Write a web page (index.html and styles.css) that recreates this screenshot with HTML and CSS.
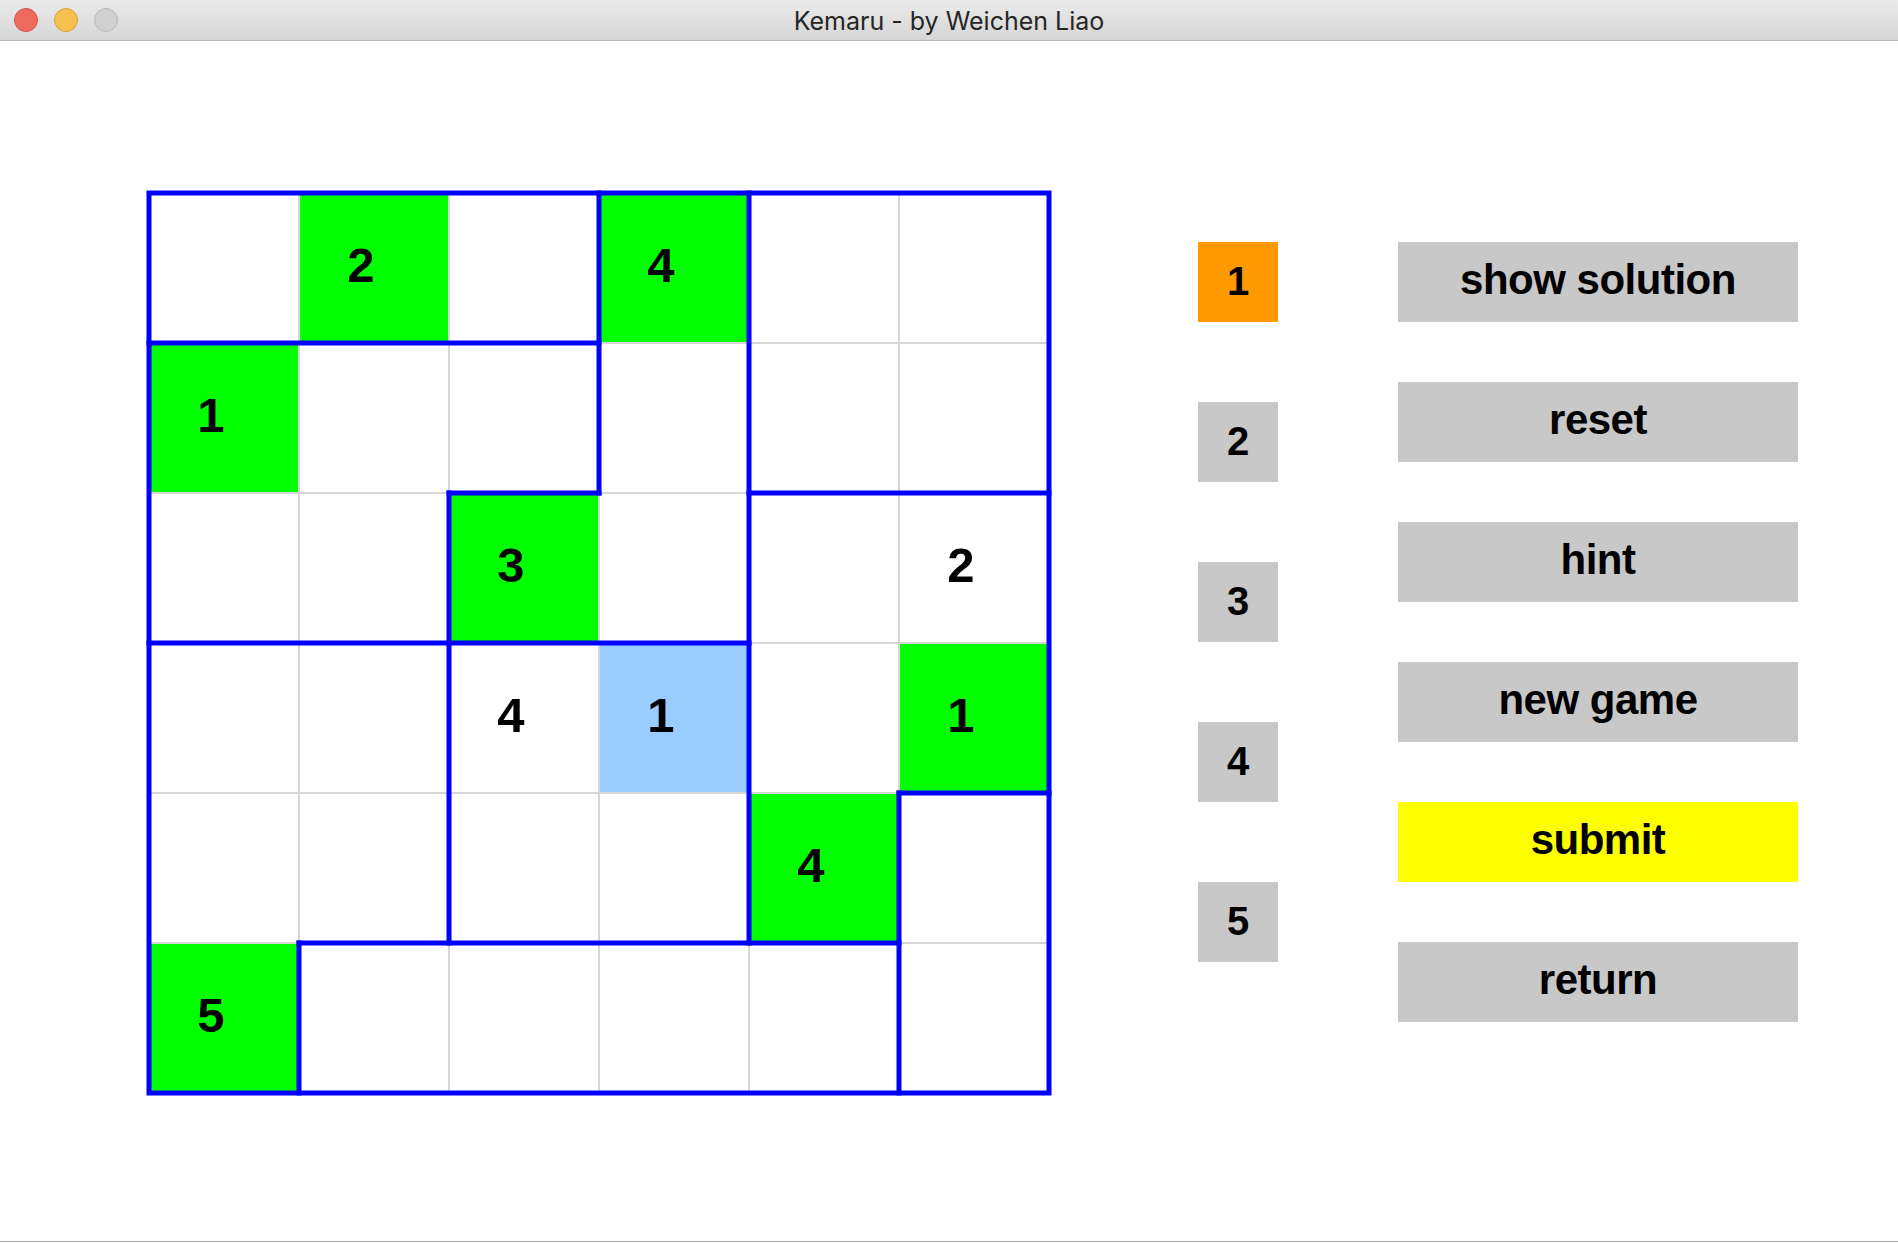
FILE: index.html
```html
<!DOCTYPE html>
<html>
<head>
<meta charset="utf-8">
<title>Kemaru - by Weichen Liao</title>
<link rel="stylesheet" href="styles.css">
</head>
<body>
<div class="window">
  <div class="titlebar">
    <div class="lights">
      <span class="light red"></span>
      <span class="light yellow"></span>
      <span class="light gray"></span>
    </div>
    <div class="title">Kemaru - by Weichen Liao</div>
  </div>
  <div class="content">
    <div class="board">
      <div class="cells">
        <div class="cell"></div>
        <div class="cell green">2</div>
        <div class="cell"></div>
        <div class="cell green">4</div>
        <div class="cell"></div>
        <div class="cell"></div>

        <div class="cell green">1</div>
        <div class="cell"></div>
        <div class="cell"></div>
        <div class="cell"></div>
        <div class="cell"></div>
        <div class="cell"></div>

        <div class="cell"></div>
        <div class="cell"></div>
        <div class="cell green">3</div>
        <div class="cell"></div>
        <div class="cell"></div>
        <div class="cell">2</div>

        <div class="cell"></div>
        <div class="cell"></div>
        <div class="cell">4</div>
        <div class="cell selected">1</div>
        <div class="cell"></div>
        <div class="cell green">1</div>

        <div class="cell"></div>
        <div class="cell"></div>
        <div class="cell"></div>
        <div class="cell"></div>
        <div class="cell green">4</div>
        <div class="cell"></div>

        <div class="cell green">5</div>
        <div class="cell"></div>
        <div class="cell"></div>
        <div class="cell"></div>
        <div class="cell"></div>
        <div class="cell"></div>
      </div>
      <svg class="regions" width="900" height="900" viewBox="0 0 900 900">
        <g stroke="#0000ff" stroke-width="5" stroke-linecap="square" fill="none">
          <rect x="0" y="0" width="900" height="900"/>
          <path d="M0 150 H450"/>
          <path d="M450 0 V300"/>
          <path d="M600 0 V750"/>
          <path d="M300 300 H450"/>
          <path d="M600 300 H900"/>
          <path d="M300 300 V750"/>
          <path d="M0 450 H600"/>
          <path d="M750 600 H900"/>
          <path d="M750 600 V900"/>
          <path d="M150 750 H750"/>
          <path d="M150 750 V900"/>
        </g>
      </svg>
    </div>
    <div class="numbers">
      <div class="num active">1</div>
      <div class="num">2</div>
      <div class="num">3</div>
      <div class="num">4</div>
      <div class="num">5</div>
    </div>
    <div class="actions">
      <div class="btn">show solution</div>
      <div class="btn">reset</div>
      <div class="btn">hint</div>
      <div class="btn">new game</div>
      <div class="btn submit">submit</div>
      <div class="btn">return</div>
    </div>
  </div>
</div>
</body>
</html>
```

FILE: styles.css
```css
html, body {
  margin: 0;
  padding: 0;
  background: #ffffff;
}

.window {
  width: 1898px;
  height: 1241px;
  border-bottom: 1px solid #a8a8a8;
  background: #ffffff;
  overflow: hidden;
}

.titlebar {
  position: relative;
  height: 40px;
  background: linear-gradient(#ebebeb, #d5d5d5);
  border-bottom: 1px solid #b4b4b4;
  display: flex;
  align-items: center;
  justify-content: center;
}

.lights {
  position: absolute;
  left: 14px;
  top: 8px;
  display: flex;
  gap: 16px;
}

.light {
  width: 22px;
  height: 22px;
  border-radius: 50%;
  border: 1px solid rgba(0,0,0,0.12);
}

.light.red { background: #ee6a5f; border-color: #d45248; }
.light.yellow { background: #f6c14f; border-color: #d9a23a; }
.light.gray { background: #d0d0d0; border-color: #b8b8b8; }

.title {
  font-family: Inter, "Noto Sans", sans-serif;
  font-size: 25px;
  color: #262626;
  margin-top: 1px;
}

.content {
  display: flex;
  align-items: flex-start;
  padding-top: 152px;
  padding-left: 149px;
}

.board {
  position: relative;
  width: 900px;
  height: 900px;
  flex: none;
}

.cells {
  display: grid;
  grid-template-columns: repeat(6, 148px);
  grid-template-rows: repeat(6, 148px);
  gap: 2px;
  padding: 1px;
  background: #d6d6d6;
}

.cell {
  background: #ffffff;
  display: flex;
  align-items: center;
  justify-content: center;
  padding-right: 26px;
  padding-bottom: 6px;
  box-sizing: border-box;
  font-family: "Liberation Sans", Arial, sans-serif;
  font-weight: bold;
  font-size: 49px;
  color: #000000;
}

.cell.green { background: #00ff00; }
.cell.selected { background: #99ccff; }

.regions {
  position: absolute;
  left: 0;
  top: 0;
  overflow: visible;
}

.numbers {
  margin-left: 149px;
  padding-top: 49px;
  display: flex;
  flex-direction: column;
  gap: 80px;
}

.num {
  width: 80px;
  height: 80px;
  background: #c8c8c8;
  display: flex;
  align-items: center;
  justify-content: center;
  font-family: "Liberation Sans", Arial, sans-serif;
  font-weight: bold;
  font-size: 40px;
  color: #000000;
  padding-bottom: 2px;
  box-sizing: border-box;
}

.num.active { background: #ff9900; }

.actions {
  margin-left: 120px;
  padding-top: 49px;
  display: flex;
  flex-direction: column;
  gap: 60px;
}

.btn {
  width: 400px;
  height: 80px;
  background: #c8c8c8;
  display: flex;
  align-items: center;
  justify-content: center;
  font-family: "Liberation Sans", Arial, sans-serif;
  font-weight: bold;
  font-size: 42px;
  letter-spacing: -0.5px;
  color: #000000;
  padding-bottom: 4px;
  box-sizing: border-box;
}

.btn.submit { background: #ffff00; }
```
